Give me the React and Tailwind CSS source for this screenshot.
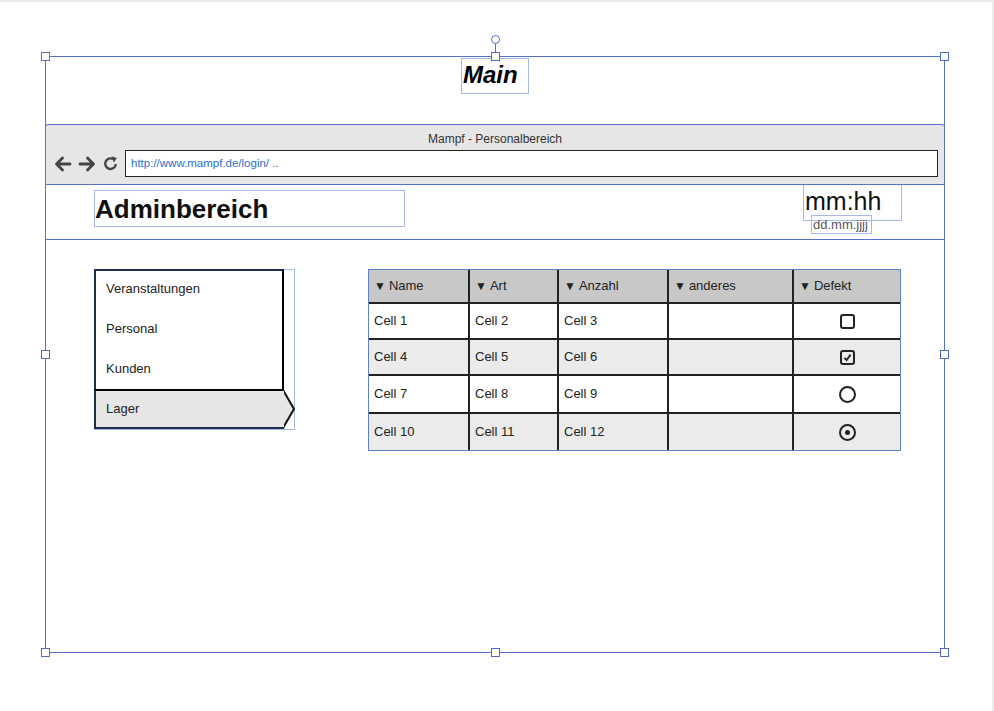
import { Fragment } from 'react';

const font = { fontFamily: '"Liberation Sans", Arial, sans-serif' };

const columns = ['Name', 'Art', 'Anzahl', 'anderes', 'Defekt'];

const rows = [
  { cells: ['Cell 1', 'Cell 2', 'Cell 3', ''], mark: 'box', h: 'h-[36px]', bg: 'bg-white' },
  { cells: ['Cell 4', 'Cell 5', 'Cell 6', ''], mark: 'boxChecked', h: 'h-[36px]', bg: 'bg-[#ebebeb]' },
  { cells: ['Cell 7', 'Cell 8', 'Cell 9', ''], mark: 'radio', h: 'h-[38px]', bg: 'bg-white' },
  { cells: ['Cell 10', 'Cell 11', 'Cell 12', ''], mark: 'radioChecked', h: 'h-[36px]', bg: 'bg-[#ebebeb]' },
];

// small square handle of the selection frame
const Handle = ({ className }) => (
  <div className={`absolute w-[9px] h-[9px] bg-white border border-[#4f6bc4] ${className}`} />
);

const Mark = ({ type }) => {
  if (type === 'box') return <div className="w-[15px] h-[15px] rounded-[3px] border-2 border-[#222]" />;
  if (type === 'boxChecked')
    return (
      <div className="w-[15px] h-[15px] rounded-[3px] border-2 border-[#222] flex items-center justify-center">
        <svg width="9" height="9" viewBox="0 0 9 9">
          <path d="M1.5 4.8 L3.6 7 L7.6 1.6" fill="none" stroke="#222" strokeWidth="1.8" />
        </svg>
      </div>
    );
  if (type === 'radio') return <div className="w-[17px] h-[17px] rounded-full border-2 border-[#222]" />;
  return (
    <div className="w-[17px] h-[17px] rounded-full border-2 border-[#222] flex items-center justify-center">
      <div className="w-[5px] h-[5px] rounded-full bg-[#222]" />
    </div>
  );
};

const Arrow = ({ flip }) => (
  <svg width="18" height="16" viewBox="0 0 18 16" className={flip ? 'scale-x-[-1]' : ''}>
    <path d="M16 8 H3 M8.5 2 L2.5 8 L8.5 14" fill="none" stroke="#444" strokeWidth="2.8" strokeLinecap="round" strokeLinejoin="round" />
  </svg>
);

const Reload = () => (
  <svg width="17" height="17" viewBox="0 0 16 16">
    <path d="M13 8.5 A5 5 0 1 1 10.5 3.8" fill="none" stroke="#444" strokeWidth="2.2" />
    <path d="M9 1.2 L14 2.8 L11.2 7 Z" fill="#444" />
  </svg>
);

export default function App() {
  return (
    <div className="relative w-[994px] h-[711px] bg-white overflow-hidden" style={font}>
      <div className="h-[2px] bg-[#e8e8e8]" />
      <div className="absolute right-0 top-0 w-[2px] h-full bg-[#ececec]" />

      {/* mockup frame with selection */}
      <div className="relative ml-[45px] mt-[54px] w-[900px] h-[597px] border border-[#5571c8]">
        {/* rotate handle */}
        <div className="absolute left-[445px] top-[-22px] w-[9px] h-[9px] rounded-full bg-white border border-[#4f6bc4]" />
        <div className="absolute left-[449px] top-[-13px] w-px h-[10px] bg-[#4f6bc4]" />

        <div className="mx-auto mt-px w-[68px] h-[36px] border border-[#a6b9e6] flex items-center">
          <span className="text-[24px] font-bold italic text-black leading-none pl-px -mt-[2px]">Main</span>
        </div>

        {/* browser chrome */}
        <div className="mt-[30px] -mx-px bg-[#e6e6e6] border border-[#5571c8] rounded-t-[3px] h-[61px]">
          <div className="text-[12px] text-[#333] text-center pt-[7px] leading-[14px]">Mampf - Personalbereich</div>
          <div className="flex items-center mt-[4px] pl-[8px] pr-[6px]">
            <div className="flex items-center gap-[6px]">
              <Arrow />
              <Arrow flip />
              <Reload />
            </div>
            <div className="ml-[6px] flex-1 h-[27px] bg-white border border-[#222] flex items-center pl-[5px]">
              <span className="text-[11.5px] text-[#2a6fd0]">http://www.mampf.de/login/ ..</span>
            </div>
          </div>
        </div>

        {/* header */}
        <div className="flex items-start h-[55px] -mx-px border-b border-[#5571c8] pl-[49px]">
          <div className="mt-[5px] w-[311px] h-[37px] border border-[#a6b9e6] flex items-center">
            <span className="text-[26px] font-bold text-[#111] leading-none">Adminbereich</span>
          </div>
          <div className="ml-[398px] flex flex-col">
            <div className="w-[99px] h-[36px] border border-[#a6b9e6] border-t-0 flex items-center">
              <span className="text-[25px] text-[#111] leading-none pl-px -mt-[2px]">mm:hh</span>
            </div>
            <div className="ml-[8px] -mt-[6px] w-[61px] h-[19px] border border-[#a6b9e6] flex items-center">
              <span className="text-[13px] text-[#555] leading-none pl-px">dd.mm.jjjj</span>
            </div>
          </div>
        </div>

        {/* content */}
        <div className="flex items-start mt-[29px] pl-[48px]">
          <div className="w-[201px] h-[161px] border border-[#a6b9e6]">
            <div className="-m-px w-[190px]">
              <div className="h-[120px] border-2 border-[#1f2d4d] border-r-black border-b-0">
                {['Veranstaltungen', 'Personal', 'Kunden'].map((t, i) => (
                  <div key={t} className={`h-[40px] flex items-center pl-[10px] text-[13px] text-[#222] ${i === 0 ? '-mt-[2px]' : ''}`}>
                    {t}
                  </div>
                ))}
              </div>
              <div className="flex h-[40px] w-[201px]">
                <div className="w-[190px] bg-[#e6e6e6] border-2 border-r-0 border-[#1f2d4d] border-t-black flex items-center pl-[10px] text-[13px] text-[#222]">
                  Lager
                </div>
                <svg width="11" height="40" viewBox="0 0 11 40" className="block">
                  <path d="M0 1 L10 20 L0 39 Z" fill="#e6e6e6" />
                  <path d="M-1 1 L10 20 L-1 39" fill="none" stroke="#111" strokeWidth="2" />
                </svg>
              </div>
            </div>
          </div>

          <div className="ml-[73px] border border-[#5f7fc6]">
            <div className="grid grid-cols-[101px_89px_110px_125px_106px]">
              {columns.map((c, i) => (
                <div
                  key={c}
                  className={`h-[34px] bg-[#c8c8c8] border-b-2 border-[#222] flex items-center pl-[5px] text-[13px] text-[#222] ${i < 4 ? 'border-r-2' : ''}`}
                >
                  <span className="text-[12px] mr-[3px] leading-none">▼</span>
                  {c}
                </div>
              ))}
              {rows.map((r, ri) => (
                <Fragment key={ri}>
                  {r.cells.map((cell, ci) => (
                    <div
                      key={ci}
                      className={`${r.h} ${r.bg} border-r-2 border-[#222] flex items-center pl-[5px] text-[13px] text-[#222] ${ri < 3 ? 'border-b-2' : ''}`}
                    >
                      {cell}
                    </div>
                  ))}
                  <div className={`${r.h} ${r.bg} border-[#222] flex items-center justify-center ${ri < 3 ? 'border-b-2' : ''}`}>
                    <Mark type={r.mark} />
                  </div>
                </Fragment>
              ))}
            </div>
          </div>
        </div>

        <Handle className="left-[-5px] top-[-5px]" />
        <Handle className="left-[445px] top-[-5px]" />
        <Handle className="right-[-5px] top-[-5px]" />
        <Handle className="left-[-5px] top-[293px]" />
        <Handle className="right-[-5px] top-[293px]" />
        <Handle className="left-[-5px] bottom-[-5px]" />
        <Handle className="left-[445px] bottom-[-5px]" />
        <Handle className="right-[-5px] bottom-[-5px]" />
      </div>
    </div>
  );
}
